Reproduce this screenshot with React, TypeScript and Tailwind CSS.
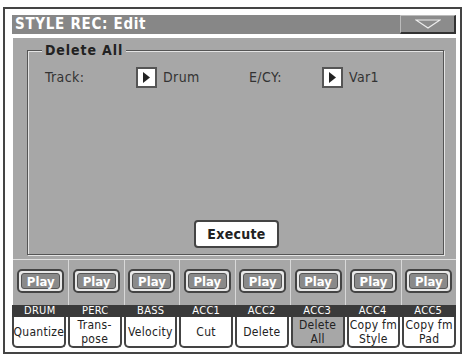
import React from "react";

const FONT = { fontFamily: '"DejaVu Sans Condensed", "DejaVu Sans", sans-serif' };

const tracks = ["DRUM", "PERC", "BASS", "ACC1", "ACC2", "ACC3", "ACC4", "ACC5"];

const tabs: { lines: string[]; active?: boolean }[] = [
    { lines: ["Quantize"] },
    { lines: ["Trans-", "pose"] },
    { lines: ["Velocity"] },
    { lines: ["Cut"] },
    { lines: ["Delete"] },
    { lines: ["Delete", "All"], active: true },
    { lines: ["Copy fm", "Style"] },
    { lines: ["Copy fm", "Pad"] },
];

function ArrowBox() {
    return (
        <div className="w-[21px] h-[21px] bg-white border-2 border-[#555] flex items-center justify-center">
            <svg width="9" height="11" viewBox="0 0 9 11">
                <path d="M1 0 L8 5.5 L1 11 Z" fill="#222" />
            </svg>
        </div>
    );
}

function PlayButton() {
    return (
        <div className="w-[47px] h-[24px] rounded-[5px] border-2 border-[#444] bg-[#e8e8e8] p-[2px]">
            <div className="w-full h-full rounded-[3px] border border-[#555] bg-[#8a8a8a] flex items-center justify-center text-white font-bold text-[13px] leading-none">
                Play
            </div>
        </div>
    );
}

export default function App() {
    return (
        <div className="w-[464px] h-[357px] bg-white pt-[7px] pl-[3px]" style={FONT}>
            <div className="w-[459px] h-[347px] border-2 border-[#444] pl-[7px] pr-[4px] pt-[6px] flex flex-col">
                {/* title bar */}
                <div className="h-[19px] bg-[#878787] flex items-center justify-between">
                    <span className="pl-[3px] text-white font-bold text-[15px] tracking-[0.7px] leading-none">
                        STYLE REC: Edit
                    </span>
                    <div className="w-[56px] h-[19px] bg-[#8c8c8c] border-l border-t border-[#bbb] border-r-2 border-b-2 border-r-[#333] border-b-[#333] flex items-center justify-center">
                        <svg width="26" height="10" viewBox="0 0 26 10">
                            <path d="M1 1 L25 1 L13 9 Z" fill="none" stroke="#eee" strokeWidth="1.2" />
                        </svg>
                    </div>
                </div>
                <div className="h-[3px] bg-white" />

                {/* main panel */}
                <div className="bg-[#a7a7a7] border-l border-t border-white flex flex-col h-[268px]">
                    <div className="pl-[14px] pr-[12px] pt-[12px] h-[221px]">
                        <div className="relative h-[205px] border border-[#555] shadow-[1px_1px_0_#e4e4e4,inset_1px_1px_0_#e4e4e4]">
                            <span className="absolute left-[14px] -top-[9px] bg-[#a7a7a7] px-[3px] font-bold text-[14px] tracking-[0.9px] text-[#222] leading-[16px]">
                                Delete All
                            </span>
                            <div className="flex items-center pt-[16px] pl-[17px] text-[14px] tracking-[0.4px] text-[#333]">
                                <span className="w-[91px]">Track:</span>
                                <ArrowBox />
                                <span className="ml-[6px] w-[86px]">Drum</span>
                                <span className="w-[73px]">E/CY:</span>
                                <ArrowBox />
                                <span className="ml-[6px]">Var1</span>
                            </div>
                            <div className="absolute left-[166px] top-[169px] w-[85px] h-[28px] bg-white border-2 border-[#444] rounded-[4px] flex items-center justify-center font-bold text-[14px] tracking-[0.3px] text-[#222]">
                                Execute
                            </div>
                        </div>
                    </div>
                    {/* play row */}
                    <div className="flex-1 border-t border-[#e0e0e0] grid grid-cols-8">
                        {tracks.map((t, i) => (
                            <div
                                key={t}
                                className={`flex items-start justify-center pt-[9px] ${i > 0 ? "border-l border-[#d8d8d8]" : ""}`}
                            >
                                <PlayButton />
                            </div>
                        ))}
                    </div>
                </div>

                {/* track labels */}
                <div className="h-[12px] bg-[#3a3a3a] grid grid-cols-8">
                    {tracks.map((t) => (
                        <div key={t} className="text-center text-white text-[11px] tracking-[0.3px] leading-[12px]">
                            {t}
                        </div>
                    ))}
                </div>

                {/* tabs */}
                <div className="grid grid-cols-8 gap-[2px] h-[31px]">
                    {tabs.map((tab, i) => (
                        <div
                            key={i}
                            className={`border-2 border-t-0 border-[#444] rounded-b-[5px] flex flex-col items-center justify-center text-[12px] tracking-[0.3px] leading-[14px] text-[#222] ${tab.active ? "bg-[#a7a7a7]" : "bg-white"}`}
                        >
                            {tab.lines.map((l) => (
                                <span key={l} className="block leading-[14px]">{l}</span>
                            ))}
                        </div>
                    ))}
                </div>
            </div>
        </div>
    );
}
